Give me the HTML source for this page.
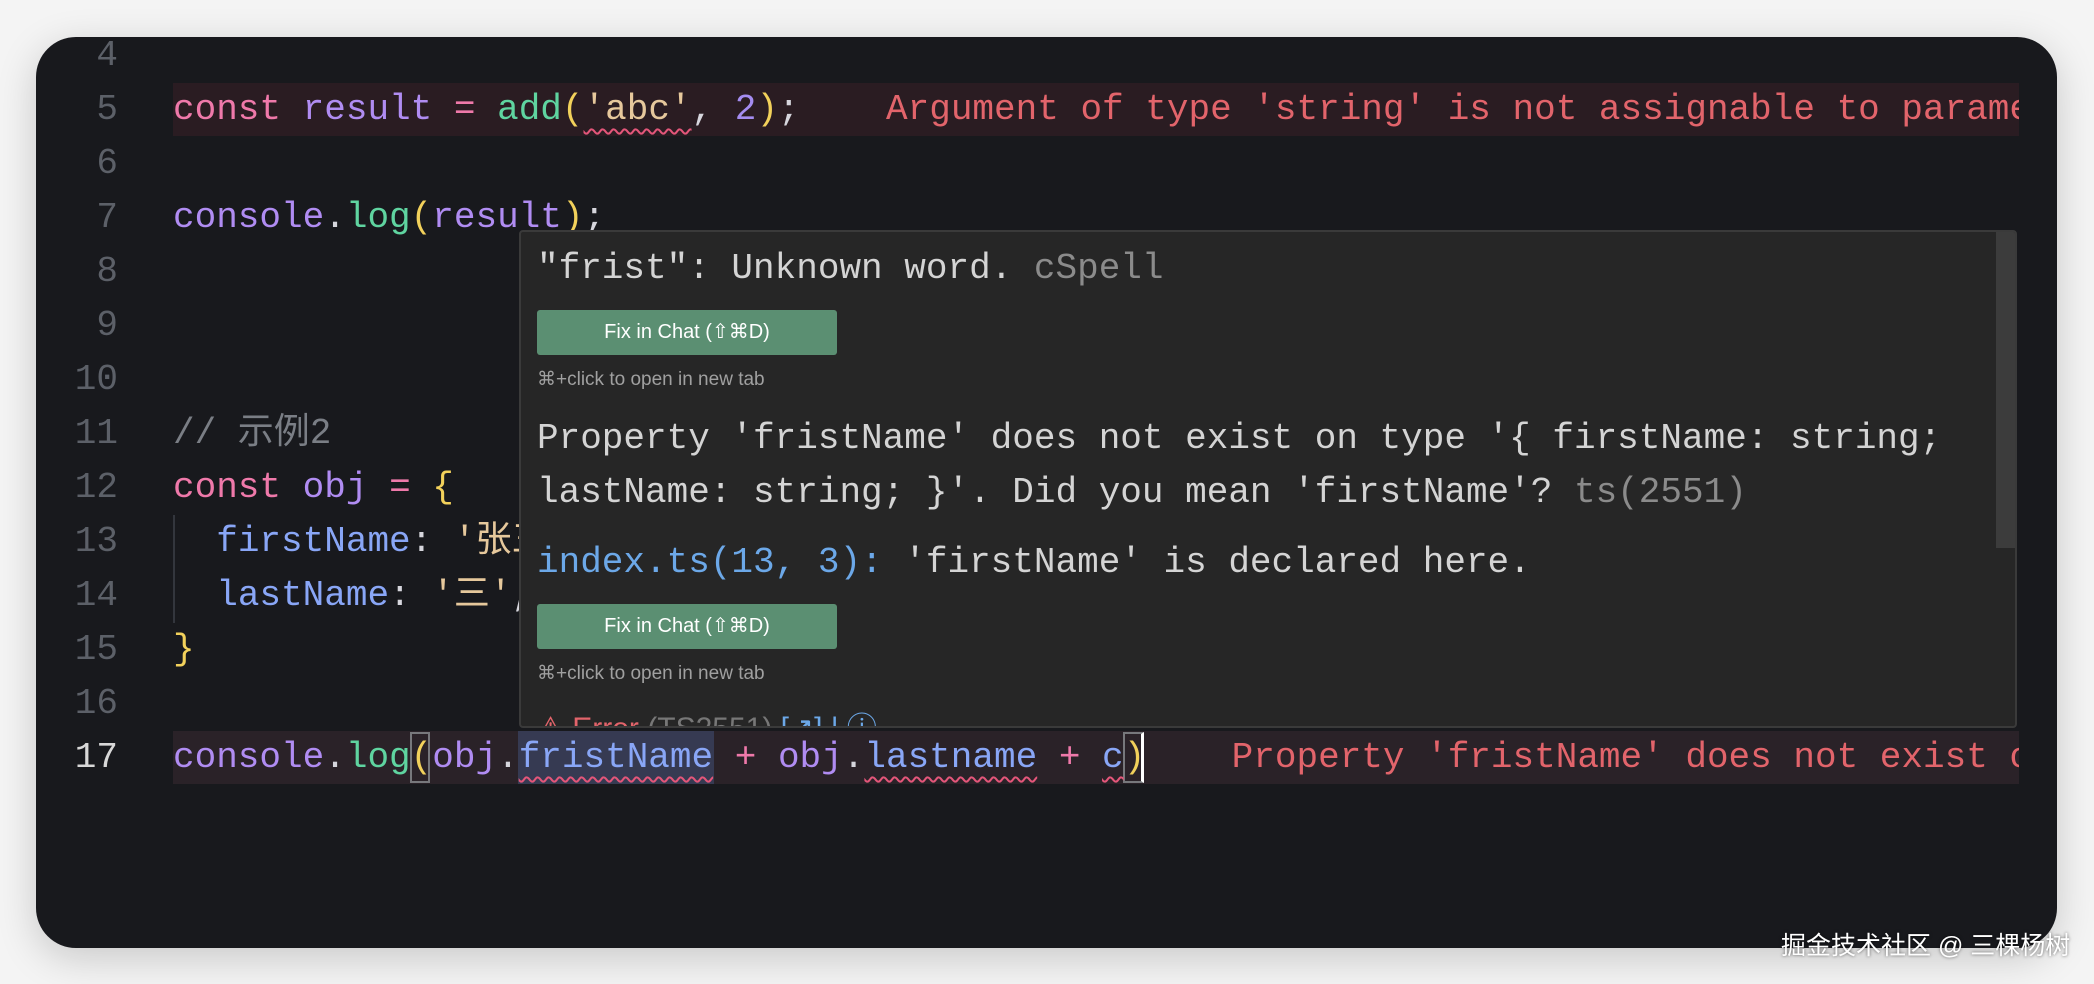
<!DOCTYPE html>
<html><head><meta charset="utf-8"><style>
*{margin:0;padding:0;box-sizing:border-box}
body{width:2094px;height:984px;background:#f4f4f4;position:relative;overflow:hidden;font-family:"Liberation Mono","Noto Sans CJK SC",monospace}
.panel{position:absolute;left:36px;top:37px;width:2021px;height:911px;background:#18191d;border-radius:40px;overflow:hidden;box-shadow:0 10px 40px rgba(0,0,0,.18)}
.ln{position:absolute;left:0;width:82px;text-align:right;color:#5c6068;font-size:36px;line-height:54px;height:54px}
.cl{position:absolute;left:137px;width:1846px;overflow:hidden;font-size:36px;line-height:54px;height:56px;white-space:pre;color:#d6d6dd}
.band{position:absolute;left:137px;width:1846px;height:53px}
.k{color:#ef79aa}.v{color:#b08cf2}.f{color:#5fd4a0}.p{color:#f2d15b}.s{color:#e6c89c}.n{color:#a48cf0}.w{color:#d6d6dd}.c{color:#7a7e85}.pr{color:#89a6f6}.err{color:#e2646b}
.sq{text-decoration:underline wavy #e4567a;text-decoration-thickness:2px;text-underline-offset:9px}
.pop{position:absolute;left:483px;top:193px;width:1498px;height:498px;background:#262626;border:2px solid #3a3a3a;border-radius:4px;overflow:hidden}
.pt{position:absolute;left:16px;font-size:36px;line-height:54px;white-space:pre;color:#d4d4d4}
.btn{position:absolute;left:16px;width:300px;height:45px;background:#5b8f72;border-radius:3px;color:#fff;font-family:"Liberation Sans",sans-serif;font-size:20px;line-height:45px;text-align:center}
.hint{position:absolute;left:16px;font-family:"Liberation Sans",sans-serif;font-size:19px;color:#a0a0a0}
.scroll{position:absolute;right:0;top:0;width:19px;height:316px;background:#3c3c3c}
</style></head><body>
<div class="panel">
  <div class="band" style="top:46px;background:#2a1c22"></div>
  <div class="band" style="top:694px;background:#2a2228"></div>

  <div class="ln" style="top:-8px">4</div>
  <div class="ln" style="top:46px">5</div>
  <div class="ln" style="top:100px">6</div>
  <div class="ln" style="top:154px">7</div>
  <div class="ln" style="top:208px">8</div>
  <div class="ln" style="top:262px">9</div>
  <div class="ln" style="top:316px">10</div>
  <div class="ln" style="top:370px">11</div>
  <div class="ln" style="top:424px">12</div>
  <div class="ln" style="top:478px">13</div>
  <div class="ln" style="top:532px">14</div>
  <div class="ln" style="top:586px">15</div>
  <div class="ln" style="top:640px">16</div>
  <div class="ln" style="top:694px;color:#d8d8d8">17</div>

  <div class="cl" style="top:46px"><span class="k">const</span> <span class="v">result</span> <span class="k">=</span> <span class="f">add</span><span class="p">(</span><span class="s sq">'abc'</span><span class="w">,</span> <span class="n">2</span><span class="p">)</span><span class="w">;</span>    <span class="err">Argument of type 'string' is not assignable to parame</span></div>
  <div class="cl" style="top:154px"><span class="v">console</span><span class="w">.</span><span class="f">log</span><span class="p">(</span><span class="v">result</span><span class="p">)</span><span class="w">;</span></div>
  <div class="cl" style="top:370px"><span class="c">// 示例2</span></div>
  <div class="cl" style="top:424px"><span class="k">const</span> <span class="v">obj</span> <span class="k">=</span> <span class="p">{</span></div>
  <div style="position:absolute;left:137px;top:478px;width:2px;height:108px;background:#33363d"></div>
  <div class="cl" style="top:478px">  <span class="pr">firstName</span><span class="w">:</span> <span class="s">'张三'</span></div>
  <div class="cl" style="top:532px">  <span class="pr">lastName</span><span class="w">:</span> <span class="s">'三'</span><span class="w">,</span></div>
  <div class="cl" style="top:586px"><span class="p">}</span></div>
  <div style="position:absolute;left:482px;top:694px;width:196px;height:53px;background:#363a52"></div>
  <div style="position:absolute;left:374px;top:695px;width:20px;height:51px;border:2px solid #77787c"></div>
  <div style="position:absolute;left:1087px;top:695px;width:21px;height:51px;border:2px solid #77787c;border-right:3px solid #fff"></div>
  <div class="cl" style="top:694px"><span class="v">console</span><span class="w">.</span><span class="f">log</span><span class="p">(</span><span class="v">obj</span><span class="w">.</span><span class="pr sq">fristName</span> <span class="k">+</span> <span class="v">obj</span><span class="w">.</span><span class="pr sq">lastname</span> <span class="k">+</span> <span class="pr sq">c</span><span class="p">)</span>    <span class="err">Property 'fristName' does not exist o</span></div>

  <div class="pop">
    <div class="scroll"></div>
    <div class="pt" style="top:10px">"frist": Unknown word. <span style="color:#8b8b8b">cSpell</span></div>
    <div class="btn" style="top:78px">Fix in Chat (⇧⌘D)</div>
    <div class="hint" style="top:136px">⌘+click to open in new tab</div>
    <div class="pt" style="top:180px">Property 'fristName' does not exist on type '{ firstName: string;</div>
    <div class="pt" style="top:234px">lastName: string; }'. Did you mean 'firstName'? <span style="color:#8b8b8b">ts(2551)</span></div>
    <div class="pt" style="top:304px"><span style="color:#6ca8e8">index.ts(13, 3):</span> 'firstName' is declared here.</div>
    <div class="btn" style="top:372px">Fix in Chat (⇧⌘D)</div>
    <div class="hint" style="top:430px">⌘+click to open in new tab</div>
    <div class="pt" style="top:470px;font-family:'Liberation Sans',sans-serif;font-size:30px"><span style="color:#e2646b">⚠ Error</span> <span style="color:#777">(TS2551)</span> <span style="color:#6ca8e8">[↗] | ⓘ</span></div>
  </div>
</div>
<div style="position:absolute;left:1781px;top:926px;font-family:'Liberation Sans','Noto Sans CJK SC',sans-serif;font-size:25px;color:#fff;text-shadow:0 0 3px rgba(0,0,0,.6)">掘金技术社区 @ 三棵杨树</div>
</body></html>
